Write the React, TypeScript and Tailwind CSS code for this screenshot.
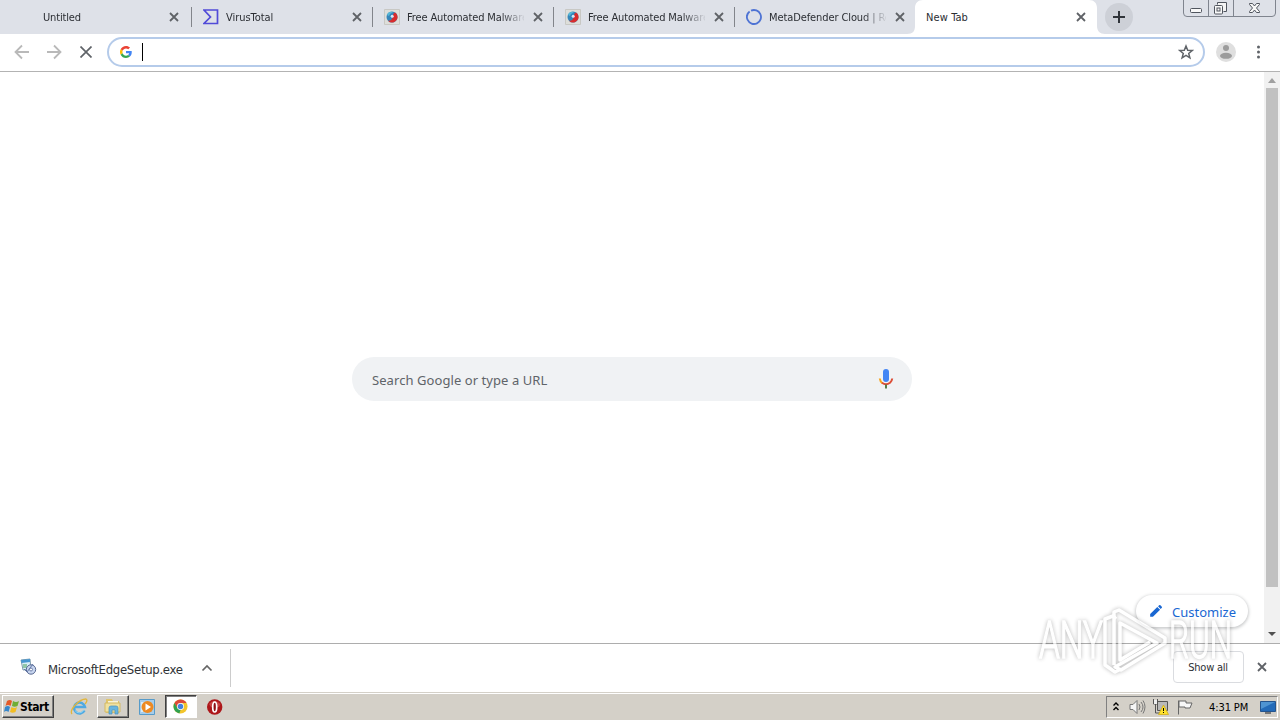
import React from 'react';

interface TabInfo {
  title: string;
  icon?: 'blank' | 'virustotal' | 'hybrid' | 'metadefender';
  tracking: string;
}

const TABS: TabInfo[] = [
  { title: 'Untitled', icon: 'blank', tracking: 'tracking-[-0.15px]' },
  { title: 'VirusTotal', icon: 'virustotal', tracking: 'tracking-[-0.05px]' },
  { title: 'Free Automated Malware', icon: 'hybrid', tracking: 'tracking-[-0.12px]' },
  { title: 'Free Automated Malware', icon: 'hybrid', tracking: 'tracking-[-0.12px]' },
  { title: 'MetaDefender Cloud | Re', icon: 'metadefender', tracking: 'tracking-[-0.1px]' },
];

const CloseIcon = ({ className = '' }: { className?: string }) => (
  <svg className={className} width="10" height="10" viewBox="0 0 10 10" stroke="currentColor" strokeWidth="1.8">
    <path d="M1 1l8 8M9 1l-8 8" />
  </svg>
);

const Favicon = ({ icon }: { icon: TabInfo['icon'] }) => {
  if (icon === 'virustotal') {
    return (
      <svg width="16" height="16" viewBox="0 0 16 16" fill="none" stroke="#514bd8" strokeWidth="1.7">
        <path d="M1 1h13.5v13.5H1L7.5 8z" />
      </svg>
    );
  }
  if (icon === 'hybrid') {
    return (
      <svg width="16" height="16" viewBox="0 0 16 16">
        <path d="M.5.5h15v15H.5z" fill="#dddeda" stroke="#c8c8c4" />
        <circle cx="8" cy="8" r="5.5" fill="#3586ba" />
        <path d="M13.3 6.500a5.500 5.500 0 0 1-9.300 5.200c3 .2 4-1.200 4.500-3.200S9 4 11 3.500q1.800 1 2.300 3z" fill="#d92c2d" />
        <path d="M3 6c1-3 4-4 6-2.500C7 4 5.500 5 5 7z" fill="#55b7d7" />
        <circle cx="8.200" cy="7.300" r="1.500" fill="#d9e8f3" />
      </svg>
    );
  }
  if (icon === 'metadefender') {
    return (
      <svg width="16" height="16" viewBox="0 0 16 16" fill="none" stroke="#4e73d4" strokeWidth="1.8">
        <circle cx="8" cy="8" r="7" strokeDasharray="42 2" transform="rotate(-115 8 8)" />
      </svg>
    );
  }
  return <span className="-ml-px w-[15px]" />;
};

const Tab = ({ tab }: { tab: TabInfo }) => (
  <div className="flex h-[34px] w-[181px] shrink-0 items-center pl-3">
    <Favicon icon={tab.icon} />
    <div className="ml-[7px] w-[117px] shrink-0 overflow-hidden whitespace-nowrap pt-[2px] text-[11px] text-[#2b2e33] [mask-image:linear-gradient(to_right,black_94px,transparent_119px)]">
      <span className={`inline-block ${tab.tracking}`}>{tab.title}</span>
    </div>
    <CloseIcon className="ml-[9px] text-[#5f6267]" />
  </div>
);

const Separator = () => <div className="-mx-[0.5px] h-5 w-px shrink-0 bg-[#82858b]" />;

const TabStrip = () => (
  <div className="flex h-[34px] bg-[#dee1e8] pl-[10px]">
    {TABS.map((tab, i) => (
      <div key={i} className="flex w-[181px] shrink-0 items-center">
        <Tab tab={tab} />
        {i < TABS.length - 1 && <Separator />}
      </div>
    ))}
    <div className="h-[34px] w-[182px] shrink-0 bg-[#dee1e8]">
      <svg className="absolute -ml-2" width="198" height="34" viewBox="0 0 198 34">
        <path d="M0 34c6 0 8-3 8-8V8c0-5 3-8 8-8h166c5 0 8 3 8 8v18c0 5 3 8 8 8z" fill="#fff" />
      </svg>
      <div className="relative flex h-[34px] items-center pl-[11px] text-[11px] text-[#2b2e33]">
        <span className="w-[150px] pt-[2px] tracking-[0.1px]">New Tab</span>
        <CloseIcon className="text-[#5f6267]" />
      </div>
    </div>
    <div className="relative mt-[3px] ml-2 flex h-7 w-7 shrink-0 items-center justify-center rounded-full bg-[#cdd0d7]">
      <svg width="12" height="12" viewBox="0 0 12 12" stroke="#30343a" strokeWidth="2">
        <path d="M6 0v12M0 6h12" />
      </svg>
    </div>
    <svg className="ml-[50px] shrink-0" width="94" height="18" viewBox="0 0 94 18" fill="none" stroke="#50555e">
      <path d="M.5 0v13q0 3.500 3.500 3.500h85q3.500 0 3.500-3.500V0M25.500 0v16.500M50.500 0v16.500" stroke="#7f848e" />
      <rect x="7.500" y="8.500" width="11" height="4" rx="1" fill="#f8f8f8" />
      <path d="M34.500 4.500v-2h9v9h-3" fill="#f4f4f4" />
      <rect x="31.500" y="5.500" width="8" height="8.500" rx="1" fill="#f8f8f8" />
      <rect x="34" y="8" width="3" height="3" />
      <path d="M66.500 3.500h3l2 2.500 2-2.500h3v1l-3 3.500 3 3.500v1h-3l-2-2.500-2 2.500h-3v-1l3-3.500-3-3.500z" fill="#f8f8f8" />
    </svg>
  </div>
);

const GoogleG = () => (
  <svg width="12" height="12" viewBox="0 0 48 48">
    <path fill="#EA4335" d="M24 9.500c3.500 0 6.700 1.200 9.200 3.600l6.900-6.900C35.900 2.400 30.500 0 24 0 14.600 0 6.500 5.400 2.600 13.200l8 6.200C12.400 13.700 17.700 9.500 24 9.500z" />
    <path fill="#4285F4" d="M47 24.500c0-1.600-.2-3.100-.4-4.500H24v9h12.900c-.6 3-2.300 5.500-4.800 7.200l7.700 6C44.400 38 47 31.800 47 24.500z" />
    <path fill="#FBBC05" d="M10.500 28.600a14.500 14.500 0 0 1 0-9.200l-8-6.200a24 24 0 0 0 0 21.600z" />
    <path fill="#34A853" d="M24 48c6.500 0 11.900-2.100 15.900-5.800l-7.700-6c-2.200 1.500-4.900 2.300-8.200 2.300-6.300 0-11.600-4.200-13.500-9.900l-8 6.200C6.500 42.600 14.600 48 24 48z" />
  </svg>
);

const Toolbar = () => (
  <div className="flex h-[38px] items-center border-b border-[#b3b3b3] bg-white pb-px pl-[14px]">
    <svg width="16" height="16" viewBox="0 0 16 16" fill="none" stroke="#b9b9b9" strokeWidth="1.8">
      <path d="M15 8H2M8 1.500L1.500 8 8 14.500" />
    </svg>
    <svg className="ml-4" width="16" height="16" viewBox="0 0 16 16" fill="none" stroke="#b9b9b9" strokeWidth="1.800">
      <path d="M1 8h13M8 1.500L14.500 8 8 14.500" />
    </svg>
    <svg className="ml-[18px]" width="12" height="12" viewBox="0 0 12 12" stroke="#5f6368" strokeWidth="1.700">
      <path d="M.5.5l11 11M11.500.5l-11 11" />
    </svg>
    <div className="ml-[15px] flex h-[30px] w-[1098px] shrink-0 items-center rounded-full border-2 border-[#b5cbea] pl-[11px]">
      <GoogleG />
      <div className="ml-[10px] h-[18px] w-px bg-black" />
      <svg className="mr-[9px] ml-auto" width="16" height="16" viewBox="0 0 16 16" fill="none" stroke="#5f6368" strokeWidth="1.500">
        <path d="M8 2l1.700 4.200 4.500.3-3.500 2.900 1.200 4.400L8 11.400l-3.900 2.400 1.200-4.400-3.500-2.900 4.500-.3z" />
      </svg>
    </div>
    <svg className="ml-[11px] shrink-0" width="20" height="20" viewBox="0 0 20 20">
      <circle cx="10" cy="10" r="10" fill="#dfdfdf" />
      <circle cx="10" cy="6" r="3" fill="#9c9c9c" />
      <ellipse cx="10" cy="13.800" rx="6" ry="3" fill="#9c9c9c" />
    </svg>
    <svg className="ml-5 shrink-0" width="4" height="14" viewBox="0 0 4 14" fill="#5f6368">
      <circle cx="2.500" cy="2" r="1.500" />
      <circle cx="2.500" cy="7" r="1.500" />
      <circle cx="2.500" cy="12" r="1.500" />
    </svg>
  </div>
);

const MicIcon = () => (
  <svg width="16" height="22" viewBox="0 0 16 22" fill="none">
    <rect x="5" y="1" width="6" height="13" rx="3" fill="#4285f4" />
    <path d="M1.800 10.500q.3 3 2.700 4.700" stroke="#f6a31c" strokeWidth="2" />
    <path d="M4 14.800q4 3 8 0 2-1.800 2.200-4.300" stroke="#dc4d36" strokeWidth="2" />
    <path d="M8 16.500v4" stroke="#577b45" strokeWidth="2" />
  </svg>
);

const Page = () => (
  <div className="flex h-[571px] bg-white">
    <div className="relative flex flex-1 justify-center">
      <div className="mt-[285px] flex h-11 w-[560px] items-center justify-between rounded-full bg-[#f0f2f4] pr-[18px] pl-5">
        <span className="pt-[3px] font-['Noto_Sans'] text-[13px] tracking-[0.07px] text-[#5f6469]">Search Google or type a URL</span>
        <MicIcon />
      </div>
      <div className="absolute right-4 bottom-4 flex h-8 w-28 items-center rounded-full bg-white pl-[13px] shadow-[0_1px_3px_1px_rgba(60,64,67,0.25)]">
        <svg width="14" height="14" viewBox="0 0 24 24" fill="#1967d2">
          <path d="M2 17.200V22h4.800L19 9.800 14.200 5zM22 6.500c.6-.6.6-1.400 0-2L19.500 2c-.6-.6-1.400-.6-2 0L15.500 4l4.500 4.500z" />
        </svg>
        <span className="ml-[9px] pt-[3px] font-['Noto_Sans'] text-[13px] text-[#1967d2]">Customize</span>
      </div>
    </div>
    <div className="flex w-4 flex-col items-center bg-[#f1f1f1]">
      <svg width="16" height="16" viewBox="0 0 16 16" fill="#a0a0a0">
        <path d="M4 11l4-5 4 5z" />
      </svg>
      <div className="h-[499px] w-[12px] bg-[#c1c1c1]" />
      <svg className="mt-auto" width="16" height="18" viewBox="0 0 16 18" fill="#505050">
        <path d="M4 7h8l-4 4z" />
      </svg>
    </div>
  </div>
);

const DownloadShelf = () => (
  <div className="flex h-[49px] items-center border-t border-[#adadad] bg-white pb-[2px]">
    <svg className="ml-5" width="17" height="18" viewBox="0 0 17 18">
      <path d="M1 2l9-1 1 10-8 1z" fill="#d8eef7" stroke="#7f9dae" />
      <path d="M1 2l9-1v3L1.500 5z" fill="#4696d0" />
      <path d="M3 7h4M3 9h4" stroke="#48a05b" />
      <circle cx="11" cy="11.500" r="4.700" fill="#c7d5ef" stroke="#566790" />
      <circle cx="11" cy="11.500" r="1.500" fill="#fff" stroke="#7082aa" />
      <path d="M4 11l3 3 6-8" fill="none" stroke="#6377a6" />
    </svg>
    <span className="ml-[11px] w-[153px] pt-[5px] text-[13px] tracking-[-0.29px] text-[#2f3236]">MicrosoftEdgeSetup.exe</span>
    <svg className="mt-px" width="12" height="8" viewBox="0 0 12 8" fill="none" stroke="#666" strokeWidth="1.700">
      <path d="M1.500 6.500L6 2l4.500 4.500" />
    </svg>
    <div className="mt-px ml-[17px] h-[38px] w-px bg-[#ccc]" />
    <div className="mr-[13px] ml-auto flex h-[32px] w-[71px] items-center justify-center rounded border border-[#dadce0] pt-[2px] pr-px text-[11px] tracking-[-0.25px] text-[#2d3034]">Show all</div>
    <CloseIcon className="mr-[13px] text-[#5f6267]" />
  </div>
);

const raised = 'border border-t-white border-l-white border-r-[#404040] border-b-[#404040] shadow-[inset_-1px_-1px_0_#808080]';

const Taskbar = () => (
  <div className="flex h-7 items-start border-t border-[#d4d0c8] bg-[#d4d0c8] pt-[2px] shadow-[inset_0_1px_0_#fff]">
    <div className={`ml-[2px] flex h-[23px] w-[52px] items-center pl-px ${raised}`}>
      <svg width="16" height="15" viewBox="0 0 16 15">
        <path d="M3 2q3-2 5 0L6.500 7Q4 5 1.500 7z" fill="#e45927" />
        <path d="M9 2q3 2 6 0l-1.500 5q-3 1.500-5.500 0z" fill="#70ad37" />
        <path d="M1 8q3-2 5 0l-1.500 5Q2 11 0 13z" fill="#3686ca" />
        <path d="M7.500 8q3 2 5.500 0l-1.500 5q-3 1.500-5.500 0z" fill="#f2bd22" />
      </svg>
      <span className="pt-px text-[12px] font-bold tracking-[-0.4px] text-black">Start</span>
    </div>
    <svg className="mt-[3px] ml-[16px]" width="18" height="18" viewBox="0 0 18 18" fill="none">
      <path d="M14.500 12.500a5.500 5.500 0 1 1 .5-3.500H5" stroke="#4fa9e2" strokeWidth="2.500" />
      <path d="M14 11.500a5 5 0 0 1-9 1" stroke="#8fd4f2" />
      <path d="M2 16C-1 12 9 1 16 1c2 1 0 4-1 5" stroke="#e2b63b" strokeWidth="1.300" />
    </svg>
    <div className={`ml-[9px] flex h-[23px] w-8 items-center justify-center ${raised}`}>
      <svg width="18" height="17" viewBox="0 0 18 17">
        <path d="M2 1h6l1 2h6v12H2z" fill="#e0c56a" />
        <path d="M4 3h10v7H4z" fill="#f7f4da" />
        <path d="M1 5h15v9H1z" fill="#f0e19f" stroke="#d3b964" />
        <path d="M5 16V10q0-2 2-2h5q2 0 2 2v6h-3v-4H8v4z" fill="#67b5df" stroke="#4b91ba" strokeWidth=".7" />
      </svg>
    </div>
    <svg className="mt-[4px] ml-[10px]" width="16" height="16" viewBox="0 0 16 16">
      <path d="M.5.5h15v15H.5z" fill="#a7cdea" stroke="#579bc9" />
      <path d="M2 3h3v10H2z" fill="#d8ecf8" />
      <circle cx="8.500" cy="8" r="6" fill="#ed8a22" />
      <path d="M6.500 4.500l5.500 3.500-5.500 3.500z" fill="#fff" />
    </svg>
    <div className="ml-[10px] flex h-[23px] w-8 items-center justify-center border border-t-[#404040] border-l-[#404040] border-r-white border-b-white bg-white pr-px shadow-[inset_1px_1px_0_#808080]">
      <svg width="15" height="15" viewBox="0 0 16 16">
        <circle cx="8" cy="8" r="7.500" fill="#f3c52b" />
        <path d="M1.500 4.300A7.500 7.500 0 0 1 14.500 4.300H8L4.800 9.900z" fill="#dc4939" />
        <path d="M1.500 4.300L4.800 9.900 8 11.700l-1.200 3.700A7.500 7.500 0 0 1 1.500 4.300z" fill="#30a150" />
        <circle cx="8" cy="8" r="3.700" fill="#fff" />
        <circle cx="8" cy="8" r="2.900" fill="#4382df" />
      </svg>
    </div>
    <svg className="mt-[4px] ml-[10px]" width="16" height="16" viewBox="0 0 16 16">
      <circle cx="7.700" cy="8" r="7.700" fill="#ad171a" />
      <path d="M2 5q5-6 11.500 0L12 8H4z" fill="#c94543" />
      <ellipse cx="7.700" cy="8" rx="2" ry="5" fill="#8e1014" stroke="#fff" strokeWidth="1.700" />
    </svg>
    <div className="mt-px mr-[2px] ml-auto flex h-[22px] w-[172px] items-center border border-t-[#808080] border-l-[#808080] border-r-white border-b-white">
      <svg className="ml-[5px]" width="8" height="10" viewBox="0 0 8 10" fill="none" stroke="#000" strokeWidth="1.400">
        <path d="M1.500 3.500l2.500-2.500 2.500 2.500M1.500 8l2.500-2.500 2.500 2.500" />
      </svg>
      <svg className="ml-[9px]" width="17" height="16" viewBox="0 0 17 16" fill="none" stroke="#777">
        <path d="M1 5.500h3l4-4v13l-4-4H1z" fill="#f5f5f5" />
        <path d="M10 5q2 3 0 6M12 3q4 5 0 10M14 1.500q4 6 0 13" />
      </svg>
      <svg className="ml-[6px]" width="17" height="16" viewBox="0 0 17 16" fill="none">
        <path d="M5.500 2.500h10v9h-10z" fill="#b9b9b9" stroke="#555" />
        <path d="M1.500 0v5h4V0M3.500 5v9H8" stroke="#555" />
        <path d="M2 1h3v4H2z" fill="#eee" />
        <path d="M11.500 6l5 9.500h-10z" fill="#ffe22d" stroke="#cea80a" strokeWidth=".7" />
        <path d="M11.500 9v3M11.500 13v1" stroke="#000" />
      </svg>
      <svg className="ml-[8px]" width="16" height="16" viewBox="0 0 16 16" fill="#f7f7f7" stroke="#666">
        <path d="M1.500 1.500v14M2 2h7v2h6l-2 5H8V8H2z" />
      </svg>
      <span className="ml-[16px] w-[48px] shrink-0 whitespace-nowrap pt-[2px] text-[11px] tracking-[-0.1px] text-black">4:31 PM</span>
      <svg className="ml-[3px] shrink-0" width="16" height="15" viewBox="0 0 16 15">
        <path d="M.5 1.500h15v10H.5z" fill="#246bb8" stroke="#25548d" />
        <path d="M1 2h14L1 9z" fill="#4f94d2" />
        <path d="M5 12h6v2H5z" fill="#777" />
      </svg>
    </div>
  </div>
);

// Translucent overlay sitting above the page and the download shelf
const Watermark = () => (
  <svg className="pointer-events-none absolute top-[600px] left-[1030px] opacity-70 [filter:drop-shadow(0_0_2px_rgba(0,0,0,0.4))]" width="212" height="82" viewBox="0 0 212 82" fill="none">
    <g fill="#fff" stroke="#fff" strokeWidth="1.500" fontFamily="Roboto, sans-serif" fontSize="51" fontWeight="300">
      <text x="9" y="58" textLength="64" lengthAdjust="spacingAndGlyphs">ANY</text>
      <text x="139" y="58" textLength="63" lengthAdjust="spacingAndGlyphs">RUN</text>
    </g>
    <g stroke="#fff" strokeWidth="3.500" strokeLinejoin="round">
      <path d="M86 19l-3-3-8 3v46l10 7 6-3" />
      <path d="M84 65V12l5-2 46 28v5L91 70l-6-3 42-24-37-20v37l30-18" />
    </g>
  </svg>
);

export default function App() {
  return (
    <div className="relative h-[720px] w-[1280px] overflow-hidden bg-white font-['DejaVu_Sans_Condensed','DejaVu_Sans',sans-serif]">
      <TabStrip />
      <Toolbar />
      <Page />
      <DownloadShelf />
      <Taskbar />
      <Watermark />
    </div>
  );
}
